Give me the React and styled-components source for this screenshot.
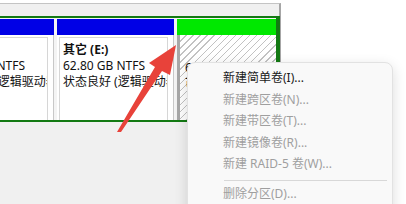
import styled, { createGlobalStyle } from "styled-components";

const GlobalStyle = createGlobalStyle`
  html, body { margin: 0; padding: 0; background: #ffffff; }
  body { font-family: "Noto Sans", "Noto Sans CJK SC", sans-serif; overflow: hidden; }
`;

const partitions = [
  { name: "软件 (D:)", size: "62.80 GB NTFS", status: "状态良好 (逻辑驱动器)", kind: "logical" },
  { name: "其它 (E:)", size: "62.80 GB NTFS", status: "状态良好 (逻辑驱动器)", kind: "logical" },
  { name: "", size: "6.00 GB", status: "可用空间", kind: "free" },
];

const menuItems = [
  { label: "新建简单卷(I)...", enabled: true },
  { label: "新建跨区卷(N)...", enabled: false },
  { label: "新建带区卷(T)...", enabled: false },
  { label: "新建镜像卷(R)...", enabled: false },
  { label: "新建 RAID-5 卷(W)...", enabled: false },
  { separator: true },
  { label: "删除分区(D)...", enabled: false },
];

function App() {
  return (
    <Screen>
      <GlobalStyle />
      <DiskPanel>
        <ExtendedFrame>
          <PartitionRow>
            {partitions.map((p, i) => (
              <Partition key={i} $kind={p.kind}>
                <PartitionHeader $kind={p.kind} />
                <PartitionBody $kind={p.kind}>
                  <PartitionInner $kind={p.kind}>
                    <PartName>{p.name}</PartName>
                    <PartLine>{p.size}</PartLine>
                    <PartLine>{p.status}</PartLine>
                  </PartitionInner>
                </PartitionBody>
              </Partition>
            ))}
          </PartitionRow>
        </ExtendedFrame>
      </DiskPanel>

      <Arrow viewBox="0 0 406 204" width="406" height="204">
        <polygon
          points="117,132 155,67 149,63 176,45 170,75 162,71 121,132"
          fill="#e8423a"
        />
      </Arrow>

      <ContextMenu>
        {menuItems.map((item, i) =>
          item.separator ? (
            <Separator key={i} />
          ) : (
            <MenuItem key={i} $enabled={item.enabled}>
              {item.label}
            </MenuItem>
          )
        )}
      </ContextMenu>
    </Screen>
  );
}

const Screen = styled.div`
  position: relative;
  width: 406px;
  height: 204px;
  overflow: hidden;
  background: #ffffff;
`;

const DiskPanel = styled.div`
  margin-top: 3px;
  width: 281px;
  height: 201px;
  background: #f0f0f0;
  border-top: 1px solid #c4c4c4;
  border-right: 2px solid #a6a6a6;
  padding-top: 12px;
  box-sizing: border-box;
`;

const ExtendedFrame = styled.div`
  width: 280px;
  height: 106px;
  box-sizing: border-box;
  border: solid #137a13;
  border-width: 2px 4px 2px 0;
  background: #f4f4f4;
  padding-top: 1px;
  overflow: hidden;
`;

const PartitionRow = styled.div`
  display: flex;
  gap: 3px;
  height: 100%;
  margin-left: -63px;
`;

const Partition = styled.div`
  display: flex;
  flex-direction: column;
  flex: none;
  width: ${(p) => (p.$kind === "free" ? "99px" : "117px")};
  height: 100%;
  background: #ffffff;
`;

const PartitionHeader = styled.div`
  height: 16px;
  flex: none;
  background: ${(p) => (p.$kind === "free" ? "#00e800" : "#0000e6")};
`;

const PartitionBody = styled.div`
  flex: 1;
  padding: 2px 5px 0 2px;
  box-sizing: border-box;
  border-right: 1px solid #c8c8c8;
  ${(p) =>
    p.$kind === "free" &&
    `
    padding: 0;
    border-right: none;
    border-left: 3px solid #a8a8a8;
    background: repeating-linear-gradient(
      135deg,
      #ffffff 0px,
      #ffffff 4px,
      #c2c2c2 4px,
      #c2c2c2 5px
    );
  `}
`;

const PartitionInner = styled.div`
  height: 100%;
  box-sizing: border-box;
  border: ${(p) => (p.$kind === "free" ? "none" : "1px solid #d6d6d6")};
  border-bottom: none;
  padding: ${(p) => (p.$kind === "free" ? "9px 0 0 5px" : "4px 0 0 3px")};
  font-size: 12px;
  line-height: 16px;
  color: #111111;
  white-space: nowrap;
  overflow: hidden;
`;

const PartName = styled.div`
  font-weight: 700;
  min-height: 16px;
`;

const PartLine = styled.div``;

const Arrow = styled.svg`
  position: absolute;
  left: 0;
  top: 0;
  pointer-events: none;
`;

const ContextMenu = styled.div`
  position: absolute;
  left: 187px;
  top: 62px;
  width: 206px;
  height: 170px;
  box-sizing: border-box;
  padding-top: 4px;
  background: #f9f9f9;
  border: 1px solid #e2e2e2;
  border-radius: 8px;
  box-shadow: 0 4px 14px rgba(0, 0, 0, 0.14);
`;

const MenuItem = styled.div`
  height: 21.6px;
  line-height: 21.6px;
  padding-left: 35px;
  font-size: 12px;
  color: ${(p) => (p.$enabled ? "#1a1a1a" : "#9f9f9f")};
  white-space: nowrap;
`;

const Separator = styled.div`
  height: 1px;
  margin: 5px 5px 2px 36px;
  background: #d8d8d8;
`;

export default App;
